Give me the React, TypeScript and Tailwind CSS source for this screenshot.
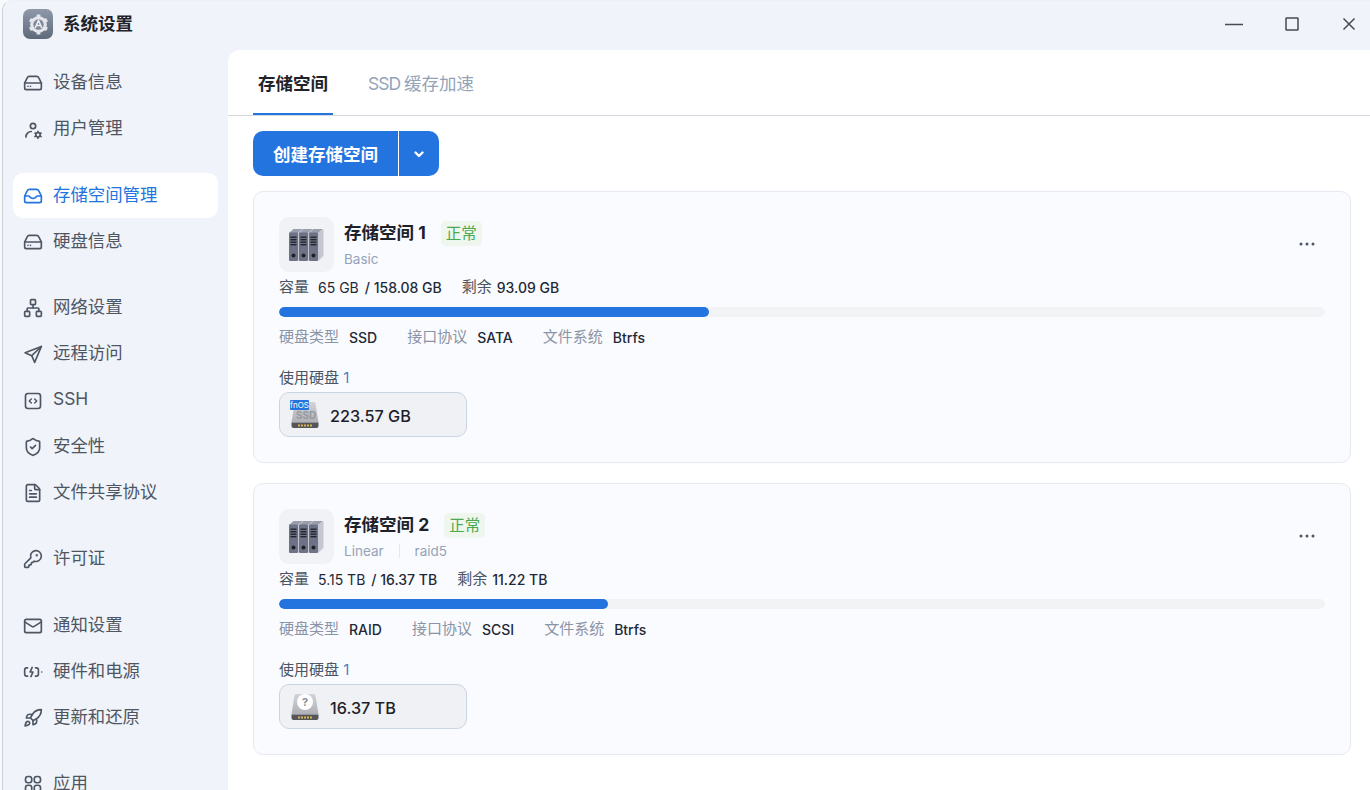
import { ReactNode } from "react";
import { FileText, KeyRound, Mail, Network, Rocket, ShieldCheck } from "lucide-react";

const FONT = "[font-family:Inter,'Noto_Sans_CJK_SC',sans-serif]";

function Svg({ children }: { children: ReactNode }) {
  return (
    <svg width="20" height="20" viewBox="0 0 24 24" fill="none" stroke="currentColor" strokeWidth="2" strokeLinecap="round" strokeLinejoin="round">
      {children}
    </svg>
  );
}

function DriveIcon() {
  return (
    <Svg>
      <path d="M2 12 5 5.800C5.500 4.700 6.400 4 7.700 4h8.600c1.300 0 2.200.7 2.700 1.800L22 12v6a2 2 0 0 1-2 2H4a2 2 0 0 1-2-2Z" />
      <path d="M2 12h20" />
      <path d="M6 16h.01M9 16h.01" />
    </Svg>
  );
}

function InboxIcon() {
  return (
    <Svg>
      <path d="M2 12 5 5.800C5.500 4.700 6.400 4 7.700 4h8.600c1.300 0 2.200.7 2.700 1.800L22 12v6a2 2 0 0 1-2 2H4a2 2 0 0 1-2-2Z" />
      <path d="M2 12h5c1 0 1.500 3 5 3s4-3 5-3h5" />
    </Svg>
  );
}

function UserGearIcon() {
  return (
    <Svg>
      <circle cx="12" cy="8.500" r="3.200" />
      <path d="M3.500 21.500c0-3.500 3-6.500 6.500-6.500" />
      <circle cx="18" cy="19" r="2.600" />
      <path d="M18 14.800v.8M18 22.400v.8M14.400 16.900l.7.4M20.900 20.700l.7.4M14.400 21.100l.7-.4M20.900 17.300l.7-.4" />
    </Svg>
  );
}

function PlaneIcon() {
  return (
    <Svg>
      <path d="M22 3 2.500 10.500l8 3.500 3.500 8Z" />
      <path d="M22 3 10.500 14" />
    </Svg>
  );
}

function CodeBoxIcon() {
  return (
    <Svg>
      <rect x="3" y="3" width="18" height="18" rx="3" />
      <path d="m10 9.500-2.500 2.500 2.500 2.500M14 9.500l2.500 2.500-2.500 2.500" strokeWidth="1.700" />
    </Svg>
  );
}

function PowerIcon() {
  return (
    <Svg>
      <path d="M5.500 7H4.500C3 7 2 8 2 9.500v5C2 16 3 17 4.500 17h1M15 7h1c1.500 0 2.500 1 2.500 2.500v5c0 1.500-1 2.500-2.500 2.500h-1" />
      <path d="m11 6.500-2.500 5.500h3.500L9.500 17.500" />
      <path d="M22.500 12h.01" />
    </Svg>
  );
}

function AppsIcon() {
  return (
    <Svg>
      <rect x="3" y="3" width="7.500" height="7.500" rx="3" />
      <rect x="13.500" y="3" width="7.500" height="7.500" rx="3" />
      <rect x="3" y="13.500" width="7.500" height="7.500" rx="3" />
      <rect x="13.500" y="13.500" width="7.500" height="7.500" rx="3" />
    </Svg>
  );
}

const NAV_GROUPS: { label: string; icon: ReactNode; active?: boolean }[][] = [
  [
    { label: "设备信息", icon: <DriveIcon /> },
    { label: "用户管理", icon: <UserGearIcon /> },
  ],
  [
    { label: "存储空间管理", icon: <InboxIcon />, active: true },
    { label: "硬盘信息", icon: <DriveIcon /> },
  ],
  [
    { label: "网络设置", icon: <Network size={20} /> },
    { label: "远程访问", icon: <PlaneIcon /> },
    { label: "SSH", icon: <CodeBoxIcon /> },
    { label: "安全性", icon: <ShieldCheck size={20} /> },
    { label: "文件共享协议", icon: <FileText size={20} /> },
  ],
  [{ label: "许可证", icon: <KeyRound size={20} /> }],
  [
    { label: "通知设置", icon: <Mail size={20} /> },
    { label: "硬件和电源", icon: <PowerIcon /> },
    { label: "更新和还原", icon: <Rocket size={20} /> },
  ],
  [{ label: "应用", icon: <AppsIcon /> }],
];

function Logo() {
  return (
    <div className="w-[30px] h-[30px] rounded-[7px] bg-gradient-to-b from-[#8f99a9] to-[#5e6a7b] flex items-center justify-center">
      <svg width="25" height="25" viewBox="0 0 24 24" fill="none">
        <path d="M12 2.500v19M3.800 7.250l16.400 9.500M3.800 16.750l16.400-9.500" stroke="#e4e6eb" strokeWidth="3.600" />
        <circle cx="12" cy="12" r="8" fill="#e4e6eb" />
        <circle cx="12" cy="12" r="5" fill="#7f8a9b" />
        <path d="M12 8 9 15M12 8l3 7M10.200 13h3.600" stroke="#eceef2" strokeWidth="1.400" strokeLinecap="round" />
      </svg>
    </div>
  );
}

function ServerIcon() {
  const xs = [0, 10, 20];
  return (
    <svg width="36" height="34" viewBox="0 0 36 34">
      {xs.map((x) => (
        <g key={x}>
          <path d={`M${x} 5 L${x + 4.500} 1 H${x + 14} L${x + 9} 5 Z`} fill="#9a9dab" />
          <path d={`M${x + 9} 5 L${x + 14.500} 1 V28 L${x + 9} 33 Z`} fill="#c5c7d0" />
          <rect x={x} y="4.500" width="9" height="28.500" rx="1" fill="#6d7286" />
          {[8.500, 11, 13.500, 16].map((y) => (
            <rect key={y} x={x + 1.500} y={y} width="6" height="1.400" fill="#23252e" />
          ))}
          <circle cx={x + 4.500} cy="27.500" r="2" fill="#1f2129" />
        </g>
      ))}
    </svg>
  );
}

function DiskBase({ children }: { children?: ReactNode }) {
  return (
    <div className="relative w-[28px] h-[30px] shrink-0">
      <svg width="28" height="30" viewBox="0 0 28 30" className="absolute inset-0">
        <defs>
          <linearGradient id="diskBody" x1="0" y1="0" x2="0" y2="1">
            <stop offset="0" stopColor="#d2d3d8" />
            <stop offset="1" stopColor="#aeb0b6" />
          </linearGradient>
        </defs>
        <path d="M3.500 3.500Q3.700 2 5.200 2H22.800Q24.300 2 24.500 3.500L27.500 22.500H.5Z" fill="url(#diskBody)" />
        <path d="M.5 22.500H27.500V26Q27.500 28 25.500 28H2.500Q.5 28 .5 26Z" fill="#54565c" />
        {[7, 10, 13, 16, 19].map((x) => (
          <rect key={x} x={x} y="24.500" width="2" height="2" fill="#d7b64c" />
        ))}
      </svg>
      {children}
    </div>
  );
}

function SsdIcon() {
  return (
    <DiskBase>
      <span className="absolute left-[5px] top-[9px] text-[10px] leading-[12px] font-bold text-[#96989f]">SSD</span>
      <span className="absolute left-[-1px] top-0 h-[10px] w-[19px] rounded-[1px] bg-[#2474e0] text-white text-[8px] leading-[10px] text-center">fnOS</span>
    </DiskBase>
  );
}

function UnknownIcon() {
  return (
    <DiskBase>
      <span className="absolute left-[6px] top-[2px] w-[16px] h-[16px] rounded-full bg-white text-[#8b8d94] text-[11px] leading-[16px] font-bold text-center">?</span>
    </DiskBase>
  );
}

type Pool = {
  name: string;
  tags: string[];
  used: string;
  total: string;
  free: string;
  percent: number;
  disk: string;
  iface: string;
  fs: string;
  size: string;
  icon: ReactNode;
};

const POOLS: Pool[] = [
  { name: "存储空间 1", tags: ["Basic"], used: "65 GB", total: "158.08 GB", free: "93.09 GB", percent: 41.1, disk: "SSD", iface: "SATA", fs: "Btrfs", size: "223.57 GB", icon: <SsdIcon /> },
  { name: "存储空间 2", tags: ["Linear", "raid5"], used: "5.15 TB", total: "16.37 TB", free: "11.22 TB", percent: 31.5, disk: "RAID", iface: "SCSI", fs: "Btrfs", size: "16.37 TB", icon: <UnknownIcon /> },
];

function PoolCard({ pool }: { pool: Pool }) {
  const specs = [
    ["硬盘类型", pool.disk],
    ["接口协议", pool.iface],
    ["文件系统", pool.fs],
  ];
  return (
    <div className="h-[272px] rounded-[10px] border border-[#e6e9ef] bg-[#fafbfe] pt-[25px] px-[25px]">
      <div className="flex items-start">
        <div className="w-[55px] h-[55px] rounded-[10px] bg-[#f1f2f5] flex items-center justify-center">
          <ServerIcon />
        </div>
        <div className="ml-[10px] flex-1">
          <div className="flex items-center h-[30px] mt-[1px]">
            <span className="text-[17.500px] font-bold text-[#1d2129]">{pool.name}</span>
            <span className="ml-[15px] h-[25px] px-[5px] rounded-[5px] bg-[#eff6ee] text-[#4aa84f] text-[15.500px] leading-[25px]">正常</span>
          </div>
          <div className="flex items-center h-[20px] mt-[1px] text-[13.500px] text-[#94a3b8]">
            {pool.tags.map((t, i) => (
              <span key={t} className={i > 0 ? "ml-[15px] pl-[15px] border-l border-[#e5e7eb] leading-[14px]" : ""}>{t}</span>
            ))}
          </div>
        </div>
        <svg width="16" height="4" viewBox="0 0 16 4" className="mt-[25px] mr-[10px]" fill="#4b5563">
          <circle cx="2" cy="2" r="1.500" />
          <circle cx="8" cy="2" r="1.500" />
          <circle cx="14" cy="2" r="1.500" />
        </svg>
      </div>
      <div className="flex items-center h-[20px] mt-[5px] text-[14px] text-[#1f2937]">
        <span className="text-[15px] text-[#4b5563] mr-[9px]">容量</span>
        <span>{pool.used}</span>
        <span className="font-medium ml-[6px]">/ {pool.total}</span>
        <span className="text-[15px] text-[#4b5563] ml-[20px] mr-[5px]">剩余</span>
        <span className="font-medium">{pool.free}</span>
      </div>
      <div className="h-[10px] mt-[10px] rounded-full bg-[#f2f3f5] overflow-hidden">
        <div className="h-full rounded-full bg-[#2474e0]" style={{ width: `${pool.percent}%` }} />
      </div>
      <div className="flex items-center h-[20px] mt-[10px] text-[14px]">
        {specs.map(([label, value], i) => (
          <span key={label} className={`flex items-center ${i > 0 ? "ml-[30px]" : ""}`}>
            <span className="text-[15px] text-[#8a94a6] mr-[10px]">{label}</span>
            <span className="font-medium text-[#1f2937]">{value}</span>
          </span>
        ))}
      </div>
      <div className="h-[20px] mt-[21px] text-[15px] leading-[20px] text-[#4b5563]">
        使用硬盘 <span className="text-[#4a7fc4]">1</span>
      </div>
      <div className="mt-[4px] w-[188px] h-[45px] rounded-[10px] border border-[#cbd5e1] bg-[#f0f1f5] flex items-center pl-[11px]">
        {pool.icon}
        <span className="ml-[11px] pt-[3px] text-[16.200px] font-medium text-[#1d2129]">{pool.size}</span>
      </div>
    </div>
  );
}

export default function App() {
  return (
    <div className={`${FONT} w-[1370px] h-[790px] overflow-hidden bg-[#f8f9fa]`}>
      <div className="ml-[2px] h-full rounded-tl-[10px] border-l border-t border-l-[#cdd1d9] border-t-[#eceff4] bg-[#f0f3f9] flex flex-col">
        <div className="h-[50px] shrink-0 flex items-center pl-[20px] -mt-[1px]">
          <div className="-mt-[2px]">
            <Logo />
          </div>
          <span className="ml-[10px] -mt-[2px] text-[17.500px] font-bold text-[#1f2329]">系统设置</span>
          <div className="ml-auto -mt-[3px] flex items-center text-[#454b55]">
            <svg width="20" height="20" viewBox="0 0 20 20" className="mr-[41px]" stroke="currentColor" strokeWidth="1.500" fill="none">
              <path d="M1 10.500h18" />
            </svg>
            <svg width="14" height="14" viewBox="0 0 14 14" className="mr-[43px]" stroke="currentColor" strokeWidth="1.500" fill="none">
              <rect x="1" y="1" width="12" height="12" rx=".5" />
            </svg>
            <svg width="14" height="14" viewBox="0 0 14 14" className="mr-[14px]" stroke="currentColor" strokeWidth="1.500" fill="none">
              <path d="M1.500 1.500l11 11M12.500 1.500l-11 11" />
            </svg>
          </div>
        </div>
        <div className="flex flex-1 min-h-0">
          <nav className="w-[225px] shrink-0 pl-[10px] pt-[10.500px] pr-[10px] flex flex-col gap-[21.400px]">
            {NAV_GROUPS.map((group, i) => (
              <div key={i} className="flex flex-col gap-[1.200px]">
                {group.map((item) => (
                  <div
                    key={item.label}
                    className={`h-[45px] shrink-0 flex items-center pl-[10px] rounded-[10px] text-[17.400px] ${
                      item.active ? "bg-white text-[#2474e0]" : "text-[#4e5663]"
                    }`}
                  >
                    {item.icon}
                    <span className="ml-[10px] -mt-[2px]">{item.label}</span>
                  </div>
                ))}
              </div>
            ))}
          </nav>
          <main className="flex-1 bg-white rounded-tl-[12px] flex flex-col min-w-0">
            <div className="h-[66px] shrink-0 border-b border-[#d5d9df] flex items-end pl-[25px]">
              <div className="w-[80px] h-[65px] border-b-2 border-[#2474e0] text-center leading-[68px] text-[17.500px] font-bold text-[#1f2329]">存储空间</div>
              <div className="ml-[35px] h-[65px] leading-[68px] text-[17.500px] text-[#94a3b8]">
                <span className="tracking-[-1px]">SSD </span>缓存加速
              </div>
            </div>
            <div className="pl-[25px] pr-[19px] pt-[15px]">
              <div className="flex h-[45px] w-[186px] text-white">
                <div className="w-[145px] rounded-l-[10px] bg-[#2474e0] text-center leading-[47px] text-[17.500px] font-bold">创建存储空间</div>
                <div className="w-[40px] ml-[1px] rounded-r-[10px] bg-[#2474e0] flex items-center justify-center">
                  <svg width="12" height="12" viewBox="0 0 12 12" fill="none" stroke="currentColor" strokeWidth="2.400" strokeLinecap="round" strokeLinejoin="round">
                    <path d="m2.500 4.500 3.500 3.500 3.500-3.500" />
                  </svg>
                </div>
              </div>
              <div className="mt-[15px] flex flex-col gap-[20px]">
                {POOLS.map((p) => (
                  <PoolCard key={p.name} pool={p} />
                ))}
              </div>
            </div>
          </main>
        </div>
      </div>
    </div>
  );
}
